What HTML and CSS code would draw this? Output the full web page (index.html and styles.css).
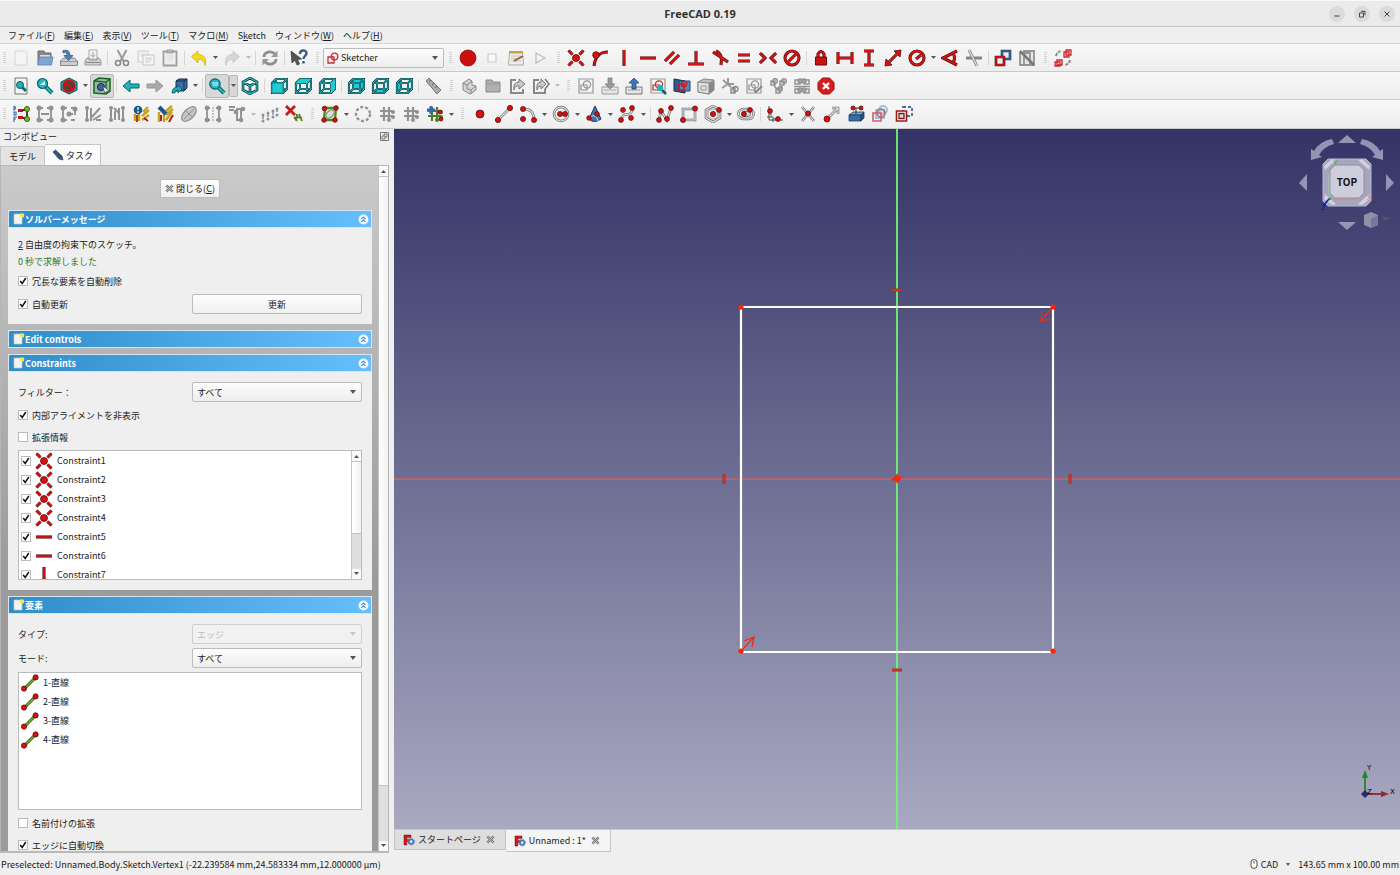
FILE: index.html
```
<!DOCTYPE html>
<html lang="ja">
<head>
    <meta charset="UTF-8">
    <meta name="viewport" content="width=device-width, initial-scale=1.0">
    <title>FreeCAD 0.19</title>
    <link rel="stylesheet" href="styles.css">
</head>
<body>
    <!-- Shared icons -->
    <svg class="sprite" aria-hidden="true">
        <symbol id="coincident" viewBox="0 0 18 18">
            <path class="edge" d="M1.500 1.500l4 4M16.500 1.500l-4 4M1.500 16.500l4-4M16.500 16.500l-4-4"/>
            <path class="core" d="M1.500 1.500l4 4M16.500 1.500l-4 4M1.500 16.500l4-4M16.500 16.500l-4-4"/>
            <circle class="dot" cx="9" cy="9" r="3.500"/>
        </symbol>
        <symbol id="horizontal" viewBox="0 0 18 18">
            <path class="edge" d="M1 9h16"/><path class="core" d="M1 9h16"/>
        </symbol>
        <symbol id="vertical" viewBox="0 0 18 18">
            <path class="edge" d="M9 1v16"/><path class="core" d="M9 1v16"/>
        </symbol>
        <symbol id="edge" viewBox="0 0 18 18">
            <path d="M3 15L15 3" stroke="#344d10" stroke-width="3"/>
            <path d="M3 15L15 3" stroke="#7bb827" stroke-width="1.4"/>
            <circle class="dot" cx="3" cy="14.6" r="2.6"/><circle class="dot" cx="14.6" cy="3.4" r="2.6"/>
        </symbol>
        <symbol id="page" viewBox="0 0 12 12">
            <path d="M1 1h8v10H1z" fill="#f4f4f2" stroke="#c4c4bc" stroke-width=".7"/>
            <circle cx="9" cy="2.5" r="2.3" fill="#f5e45c"/>
        </symbol>
        <symbol id="chevrons" viewBox="0 0 12 12">
            <circle cx="6" cy="6" r="5.4" fill="#f4f9fd"/>
            <path d="M3.8 5.7L6 3.5l2.2 2.2M3.8 8.7L6 6.5l2.2 2.2" fill="none" stroke="#3c83ba" stroke-width="1.1"/>
        </symbol>
        <symbol id="cross" viewBox="0 0 10 10">
            <path d="M1.5 1.5l7 7M8.5 1.5l-7 7" stroke="#757575" stroke-width="2.6"/>
            <path d="M1.5 1.5l7 7M8.5 1.5l-7 7" stroke="#c9c9c9" stroke-width="1"/>
        </symbol>
        <symbol id="logo" viewBox="0 0 12 12">
            <path d="M1 1h7v2.6H3.8v1.8h2.7v2.2H3.8V11H1z" fill="#d4151b" stroke="#6e1010" stroke-width=".5"/>
            <circle cx="8.2" cy="7.7" r="2.2" fill="#dee" stroke="#4b76b5" stroke-width="1.7"/>
            <circle cx="8.2" cy="7.7" r="3.3" fill="none" stroke="#4b76b5" stroke-width="1" stroke-dasharray="1.3 1.3"/>
        </symbol>
        <symbol id="cube" viewBox="0 0 18 18">
            <path d="M2 6l4-4h11v10l-4 4H2z" fill="none" stroke="#063c40" stroke-width="2.2"/>
            <path d="M2 6h11v10M13 6l4-4M6 2v10h11M6 12l-4 4" fill="none" stroke="#063c40" stroke-width="2"/>
            <path d="M2 6l4-4h11v10l-4 4H2zM2 6h11v10M13 6l4-4M6 2v10h11M6 12l-4 4" fill="none" stroke="#2fb9c0" stroke-width=".9"/>
        </symbol>
        <symbol id="hash" viewBox="0 0 18 18">
            <path d="M6 2v14M11 2v14M2 6h13M2 11h12" fill="none" stroke="currentColor" stroke-width="2.2"/>
            <circle cx="15" cy="7" r="2" fill="currentColor"/><circle cx="15" cy="12" r="2" fill="currentColor"/><circle cx="11" cy="15" r="2" fill="currentColor"/>
        </symbol>
        <symbol id="sheet" viewBox="0 0 18 18">
            <path d="M2 2h14v14H2z" fill="#f2f2f2" stroke="#999" stroke-width="1.2"/>
            <path d="M4 8h6v5H4z" fill="none" stroke="currentColor" stroke-width="1.2"/>
            <circle cx="10" cy="7.5" r="3.6" fill="none" stroke="currentColor" stroke-width="1.2"/>
        </symbol>
    </svg>

    <div class="window">
        <header class="titlebar">
            <h1>FreeCAD 0.19</h1>
            <div class="window-buttons">
                <button aria-label="Minimize"><svg viewBox="0 0 8 8"><path d="M1.5 6h5"/></svg></button>
                <button aria-label="Restore"><svg viewBox="0 0 8 8"><path d="M1.5 3h4v4h-4zM3 1.3h4v4"/></svg></button>
                <button aria-label="Close"><svg viewBox="0 0 8 8"><path d="M1.5 1.5l5 5M6.5 1.5l-5 5"/></svg></button>
            </div>
        </header>

        <nav class="menubar">
            <a href="#">ファイル(<u>F</u>)</a>
            <a href="#">編集(<u>E</u>)</a>
            <a href="#">表示(<u>V</u>)</a>
            <a href="#">ツール(<u>T</u>)</a>
            <a href="#">マクロ(<u>M</u>)</a>
            <a href="#">S<u>k</u>etch</a>
            <a href="#">ウィンドウ(<u>W</u>)</a>
            <a href="#">ヘルプ(<u>H</u>)</a>
        </nav>

        <!-- File, workbench, macro and constraint tools -->
        <div class="toolbar">
            <span class="grip"></span>
            <button class="tool" aria-label="New"><svg viewBox="0 0 18 18"><path d="M3 2h12v14H3z" fill="#f5f5f5" stroke="#d3d3d3"/><circle cx="13.5" cy="3.5" r="2.5" fill="#eee"/></svg></button>
            <button class="tool" aria-label="Open"><svg viewBox="0 0 18 18"><path d="M2 14V2h6l1 2h6v10z" fill="#888" stroke="#6d6d6d"/><path d="M4 6h10v4H4z" fill="#ddd"/><path d="M3.5 8H17l-1.5 8H1.5z" fill="#7ea6d3" stroke="#5b82b3" stroke-width=".8"/></svg></button>
            <button class="tool" aria-label="Save"><svg viewBox="0 0 18 18"><path d="M3.5 9h11l3 3v4.5H.5V12z" fill="#ccc" stroke="#888"/><path d="M1 12.500h16" stroke="#999"/><path d="M3 1.500c4-1 7 0 7 5h3L8.500 11.500 4 6.500h3C7 4 6 3 3 4z" fill="#4d83b8" stroke="#2b5580" stroke-width=".7"/></svg></button>
            <button class="tool" aria-label="Print"><svg viewBox="0 0 18 18"><path d="M5 1h8v9H5z" fill="#f4f4f4" stroke="#aaa"/><path d="M9 3v5M7 6l2 2 2-2" stroke="#bbb" stroke-width="1.5" fill="none"/><path d="M3 9h2v2h8V9h2l2 3v4H1v-4z" fill="#d2d2d2" stroke="#999"/><path d="M2 13.500h14" stroke="#888"/></svg></button>
            <span class="sep"></span>
            <button class="tool" aria-label="Cut"><svg viewBox="0 0 18 18"><path d="M4.500 1l6 11M13.500 1l-6 11" stroke="#9b9b9b" stroke-width="2"/><circle cx="5" cy="14" r="2.500" fill="none" stroke="#888" stroke-width="1.500"/><circle cx="13" cy="14" r="2.500" fill="none" stroke="#888" stroke-width="1.500"/></svg></button>
            <button class="tool" aria-label="Copy"><svg viewBox="0 0 18 18"><path d="M1 2h10v11H1z" fill="#f3f3f3" stroke="#ccc"/><path d="M3 5h6M3 7h6" stroke="#ddd"/><path d="M6 6h11v10H6z" fill="#f6f6f6" stroke="#c5c5c5"/><path d="M8 9h7M8 11h7M8 13h5" stroke="#ccc"/></svg></button>
            <button class="tool" aria-label="Paste"><svg viewBox="0 0 18 18"><path d="M2.500 2.500h13v14h-13z" fill="#eee" stroke="#a0a0a0" stroke-width="1.800"/><path d="M6 1h6v3H6z" fill="#bbb" stroke="#888" stroke-width=".7"/><path d="M6 7h7M6 9h7M6 11h5" stroke="#ddd"/></svg></button>
            <span class="sep"></span>
            <button class="tool" aria-label="Undo"><svg viewBox="0 0 18 18"><path d="M1.500 7.500L8 2v3.500c6 0 9 4 7 11-1-5-3-6-7-6V14z" fill="#f5da1b" stroke="#cdb01a" stroke-width=".8"/></svg></button>
            <button class="more" aria-label="Undo list"></button>
            <button class="tool" aria-label="Redo"><svg viewBox="0 0 18 18"><path d="M16.500 7.500L10 2v3.500c-6 0-9 4-7 11 1-5 3-6 7-6V14z" fill="#d6d6d6" stroke="#c5c5c5" stroke-width=".8"/></svg></button>
            <button class="more" aria-label="Redo list" disabled></button>
            <span class="sep"></span>
            <button class="tool" aria-label="Refresh"><svg viewBox="0 0 18 18"><path d="M3 8c0-5 7-7 11-3M15 10c0 5-7 7-11 3" fill="none" stroke="#8e8e8e" stroke-width="2.800"/><path d="M16.500 1.500V8H10zM1.500 16.500V10H8z" fill="#999"/></svg></button>
            <span class="sep"></span>
            <button class="tool" aria-label="What's this?"><svg viewBox="0 0 18 18"><path d="M1 2l1 12 3-3 2 5 2.500-1-2-4.500 4-.5z" fill="#555" stroke="#333" stroke-width=".7"/><path d="M10 5c0-5 6.500-4 6.500-1s-3 3-3 6M13.500 12v2.500" fill="none" stroke="#38598c" stroke-width="2.400"/></svg></button>
            <span class="grip"></span>
            <div class="workbench">
                <svg viewBox="0 0 12 12" aria-hidden="true"><path d="M1 5h6v6H1z" fill="none" stroke="#cf2a2f" stroke-width="1.300"/><circle cx="7.500" cy="4.500" r="3.300" fill="none" stroke="#cf2a2f" stroke-width="1.300"/></svg>
                <select aria-label="Workbench"><option>Sketcher</option></select>
            </div>
            <span class="grip"></span>
            <button class="tool" aria-label="Record macro"><svg viewBox="0 0 18 18"><circle cx="9" cy="9" r="8" fill="#cb0f0f" stroke="#850808" stroke-width=".7"/></svg></button>
            <button class="tool" aria-label="Stop macro"><svg viewBox="0 0 18 18"><path d="M5 5h8v8H5z" fill="#f8f8f8" stroke="#ccc" stroke-width="1.200"/></svg></button>
            <button class="tool" aria-label="Macros"><svg viewBox="0 0 18 18"><path d="M2.500 3h13l1 13h-15z" fill="#ededed" stroke="#999" stroke-width=".8"/><path d="M2 2h14v2.500H2z" fill="#c6a33d"/><path d="M4 7h10M4 9.500h8M4 12h10" stroke="#bbb" stroke-width=".8"/><path d="M7 12l9-5" stroke="#965f36" stroke-width="2"/></svg></button>
            <button class="tool" aria-label="Run macro"><svg viewBox="0 0 18 18"><path d="M5 4l9 5-9 5z" fill="#f4f4f4" stroke="#bbb" stroke-width="1.200"/></svg></button>
            <span class="grip"></span>
            <button class="tool" aria-label="Coincident"><svg><use href="#coincident"/></svg></button>
            <button class="tool" aria-label="Point on object"><svg viewBox="0 0 18 18"><path class="edge" d="M3 17C4 9 7 3 17 3"/><path class="core" d="M3 17C4 9 7 3 17 3"/><circle class="dot" cx="5" cy="6" r="3.300"/></svg></button>
            <button class="tool" aria-label="Vertical"><svg><use href="#vertical"/></svg></button>
            <button class="tool" aria-label="Horizontal"><svg><use href="#horizontal"/></svg></button>
            <button class="tool" aria-label="Parallel"><svg viewBox="0 0 18 18"><path class="edge" d="M2 12L11 3M7 15L16 6"/><path class="core" d="M2 12L11 3M7 15L16 6"/></svg></button>
            <button class="tool" aria-label="Perpendicular"><svg viewBox="0 0 18 18"><path class="edge" d="M9 2v13M1 15h16"/><path class="core" d="M9 2v13M1 15h16"/></svg></button>
            <button class="tool" aria-label="Tangent"><svg viewBox="0 0 18 18"><path class="edge" d="M2 3l15 10M5 2c6 3 6 8 5 14"/><path class="core" d="M2 3l15 10M5 2c6 3 6 8 5 14"/></svg></button>
            <button class="tool" aria-label="Equal"><svg viewBox="0 0 18 18"><path class="edge" d="M3 6h12M3 12h12"/><path class="core" d="M3 6h12M3 12h12"/></svg></button>
            <button class="tool" aria-label="Symmetric"><svg viewBox="0 0 18 18"><path class="edge" d="M1 4l5 5-5 5M17 4l-5 5 5 5"/><path class="core" d="M1 4l5 5-5 5M17 4l-5 5 5 5"/></svg></button>
            <button class="tool" aria-label="Block"><svg viewBox="0 0 18 18"><g class="edge"><circle cx="9" cy="9" r="7"/><path d="M4 14L14 4"/></g><g class="core"><circle cx="9" cy="9" r="7"/><path d="M4 14L14 4"/></g></svg></button>
            <span class="sep"></span>
            <button class="tool" aria-label="Lock"><svg viewBox="0 0 18 18"><path class="edge" d="M6 9V5q3-5 6 0v4"/><path class="core" d="M6 9V5q3-5 6 0v4"/><path d="M3.500 8h11v8h-11z" fill="#c91212" stroke="#6b0808"/></svg></button>
            <button class="tool" aria-label="Horizontal distance"><svg viewBox="0 0 18 18"><path class="edge" d="M2 3v12M16 3v12M2 9h14"/><path class="core" d="M2 3v12M16 3v12M2 9h14"/></svg></button>
            <button class="tool" aria-label="Vertical distance"><svg viewBox="0 0 18 18"><path class="edge" d="M4 2h10M4 16h10M9 2v14"/><path class="core" d="M4 2h10M4 16h10M9 2v14"/></svg></button>
            <button class="tool" aria-label="Distance"><svg viewBox="0 0 18 18"><path class="edge" d="M4 14L14 4"/><path d="M1 17l1-7 6 6zM17 1l-1 7-6-6z" fill="#d31212" stroke="#5a0808" stroke-width=".8"/><path class="core" d="M4 14L14 4"/></svg></button>
            <button class="tool" aria-label="Radius"><svg viewBox="0 0 18 18"><g class="edge"><circle cx="9" cy="9" r="7"/><path d="M8 10l5-4"/></g><g class="core"><circle cx="9" cy="9" r="7"/><path d="M8 10l5-4"/></g></svg></button>
            <button class="more" aria-label="Radius tools"></button>
            <button class="tool" aria-label="Angle"><svg viewBox="0 0 18 18"><path class="edge" d="M16 2L2 9l14 7M12 4q3 5 0 10"/><path class="core" d="M16 2L2 9l14 7M12 4q3 5 0 10"/></svg></button>
            <button class="tool" aria-label="Refraction"><svg viewBox="0 0 18 18"><path d="M1 9h16M4 1l8 16" stroke="#858585" stroke-width="2.800"/><path d="M4 1l8 16" stroke="#ddd" stroke-width="1.400"/></svg></button>
            <span class="sep"></span>
            <button class="tool" aria-label="Toggle driving"><svg viewBox="0 0 18 18"><path d="M8 2h8v8H8z" fill="#eee" stroke="#1c3a66" stroke-width="2.600"/><path d="M8 2h8v8H8z" fill="none" stroke="#4778b3"/><path d="M2 8h8v8H2z" fill="#eee" stroke="#5b0808" stroke-width="2.600"/><path d="M2 8h8v8H2z" fill="none" stroke="#e21818" stroke-width="1.300"/></svg></button>
            <button class="tool" aria-label="Toggle active"><svg viewBox="0 0 18 18"><path d="M6 2h10v14H6zM2 4h10v12H2z" fill="#e5e5e5" stroke="#949494" stroke-width="1.800"/><path d="M2 2l14 14" stroke="#777" stroke-width="2.500"/></svg></button>
            <span class="grip"></span>
            <button class="tool" aria-label="Switch virtual space"><svg viewBox="0 0 18 18"><path d="M2 7q1-4 5-5M16 11q-1 4-5 5" fill="none" stroke="#888" stroke-width="2" stroke-dasharray="3 1"/><path d="M10 3h5v5h-5zM12 1h5v5h-5zM3 11h5v5H3zM1 13h5v4H1z" fill="#f6d5d5" stroke="#c9292e" stroke-width="1.300"/></svg></button>
        </div>

        <!-- View, structure and sketch tools -->
        <div class="toolbar">
            <span class="grip"></span>
            <button class="tool" aria-label="Fit all"><svg viewBox="0 0 18 18"><path d="M3 1h12v16H3z" fill="#f4f4f4" stroke="#777"/><path d="M10 10l4 4" stroke="#0b6f77" stroke-width="3"/><circle cx="8" cy="8" r="3.500" fill="#1eb1bd" stroke="#07636b"/></svg></button>
            <button class="tool" aria-label="Fit selection"><svg viewBox="0 0 18 18"><path d="M10 10l6 6" stroke="#07636b" stroke-width="4"/><path d="M10 10l6 6" stroke="#27b9c3" stroke-width="2"/><circle cx="6.500" cy="6.500" r="5" fill="#25b8c3" stroke="#07636b" stroke-width="1.200"/><path d="M4 8l5-4v4z" fill="#e4ffff"/></svg></button>
            <button class="tool" aria-label="Draw style"><svg viewBox="0 0 18 18"><path d="M9 1l8 4v8l-8 4-8-4V5z" fill="#23a5ad" stroke="#07565d"/><circle cx="9" cy="9" r="5.500" fill="#444" stroke="#c51616" stroke-width="2.200"/><path d="M5 5l8 8" stroke="#c51616" stroke-width="2.200"/></svg></button>
            <button class="more" aria-label="Draw styles"></button>
            <button class="tool pressed" aria-label="Selection box"><svg viewBox="0 0 18 18"><path d="M1 4l5-3 11 1v12l-4 3-12-1z" fill="#9bb8a0" stroke="#14691e" stroke-width="1.500"/><path d="M1 4l12 1v12M13 5l4-3" fill="none" stroke="#14691e" stroke-width="1.300"/><circle cx="8" cy="10" r="3.600" fill="#3465a4" stroke="#152c57"/><path d="M10 9l6 5-3 .5-1 2.500z" fill="#fff" stroke="#333" stroke-width=".6"/></svg></button>
            <span class="sep"></span>
            <button class="tool" aria-label="Back"><svg viewBox="0 0 18 18"><path d="M1 9l7-6v4h9v4H8v4z" fill="#1fb5bf" stroke="#07636b"/></svg></button>
            <button class="tool" aria-label="Forward"><svg viewBox="0 0 18 18"><path d="M17 9l-7-6v4H1v4h9v4z" fill="#aaa" stroke="#959595"/></svg></button>
            <button class="tool" aria-label="Link navigation"><svg viewBox="0 0 18 18"><path d="M6 4l3-2h8v9l-3 3H6z" fill="#3d6ca8" stroke="#142b4b"/><path d="M6 4h8v10M14 4l3-2" fill="none" stroke="#142b4b"/><path d="M2 16q0-6 6-6V8l4 4-4 4v-3q-3 0-3 3z" fill="#25aab5" stroke="#07565d" stroke-width=".8"/></svg></button>
            <button class="more" aria-label="Link actions"></button>
            <span class="sep"></span>
            <button class="tool pressed" aria-label="Sync view"><svg viewBox="0 0 18 18"><path d="M10 10l6 6" stroke="#07636b" stroke-width="4"/><path d="M10 10l6 6" stroke="#27b9c3" stroke-width="2"/><circle cx="7" cy="7" r="5.200" fill="#25b8c3" stroke="#07636b" stroke-width="1.200"/><path d="M4 6h6M5 8h5" stroke="#e0ffff"/></svg></button>
            <button class="more pressed" aria-label="View tools"></button>
            <button class="tool" aria-label="Isometric"><svg viewBox="0 0 18 18"><path d="M9 1l7 4v8l-7 4-7-4V5zM2 5l7 4 7-4M9 9v8" fill="none" stroke="#063c40" stroke-width="2.600"/><path d="M9 1l7 4v8l-7 4-7-4V5zM2 5l7 4 7-4M9 9v8" fill="none" stroke="#2fb9c0" stroke-width="1.100"/></svg></button>
            <span class="sep"></span>
            <button class="tool" aria-label="Front"><svg viewBox="0 0 18 18"><use href="#cube"/><path d="M2 6h11v10H2z" fill="#22cbd4" stroke="#078b93"/></svg></button>
            <button class="tool" aria-label="Top"><svg viewBox="0 0 18 18"><use href="#cube"/><path d="M2 6l4-4h11l-4 4z" fill="#22cbd4"/></svg></button>
            <button class="tool" aria-label="Right"><svg viewBox="0 0 18 18"><use href="#cube"/><path d="M13 6l4-4v10l-4 4z" fill="#22cbd4"/></svg></button>
            <span class="sep"></span>
            <button class="tool" aria-label="Rear"><svg viewBox="0 0 18 18"><path d="M6 2h11v10H6z" fill="#22cbd4"/><use href="#cube"/></svg></button>
            <button class="tool" aria-label="Bottom"><svg viewBox="0 0 18 18"><path d="M2 16l4-4h11l-4 4z" fill="#22cbd4"/><use href="#cube"/></svg></button>
            <button class="tool" aria-label="Left"><svg viewBox="0 0 18 18"><path d="M2 6l4-4v10l-4 4z" fill="#22cbd4"/><use href="#cube"/></svg></button>
            <span class="sep"></span>
            <button class="tool" aria-label="Measure"><svg viewBox="0 0 18 18"><path d="M2 4l3-3 12 12-4 4z" fill="#aaa" stroke="#777"/><path d="M7 3L5 5M10 6L8 8M13 9l-2 2" stroke="#666"/></svg></button>
            <span class="grip"></span>
            <button class="tool" aria-label="Part"><svg viewBox="0 0 18 18"><path d="M3 6l6-4 3 2v4l4 1v4l-6 4-7-4z" fill="#d5d5d5" stroke="#888"/><path d="M3 6l4 2v4l4 1v4M7 8l5-4M11 13l5-4" fill="none" stroke="#888"/></svg></button>
            <button class="tool" aria-label="Group"><svg viewBox="0 0 18 18"><path d="M2 3h6l1 2h7v10H2z" fill="#b0b0b0" stroke="#888"/><path d="M2 7h14" stroke="#999"/></svg></button>
            <button class="tool" aria-label="Make link"><svg viewBox="0 0 18 18"><path d="M8 3H3v13h12v-4" fill="none" stroke="#888" stroke-width="2"/><path d="M6 13q-1-8 5-8V2l6 5-6 5V9q-4-1-5 4z" fill="#c8c8c8" stroke="#777"/></svg></button>
            <button class="tool" aria-label="Make sub-link"><svg viewBox="0 0 18 18"><path d="M7 3H2v13h11v-4" fill="none" stroke="#888" stroke-width="2"/><path d="M5 13q-1-8 4-8V2l5 5-5 5V9q-3-1-4 4z" fill="#c8c8c8" stroke="#777"/><path d="M13 2l4 5-4 5" fill="none" stroke="#777" stroke-width="1.500"/></svg></button>
            <button class="more" aria-label="Link tools" disabled></button>
            <span class="grip"></span>
            <button class="tool dim" aria-label="New sketch"><svg><use href="#sheet"/></svg></button>
            <button class="tool" aria-label="Edit sketch"><svg viewBox="0 0 18 18"><path d="M1 10h16v7H1z" fill="#e6e6e6" stroke="#999"/><path d="M3 13h12" stroke="#aaa"/><path d="M7 1h4v6h3l-5 5-5-5h3z" fill="#999" stroke="#777" stroke-width=".7"/></svg></button>
            <button class="tool" aria-label="Leave sketch"><svg viewBox="0 0 18 18"><path d="M1 10h16v7H1z" fill="#e6e6e6" stroke="#777"/><path d="M3 13h12" stroke="#999"/><path d="M7 12V6H4l5-5 5 5h-3v6z" fill="#3f78b4" stroke="#173a66" stroke-width=".7"/></svg></button>
            <button class="tool red" aria-label="View sketch"><svg viewBox="0 0 18 18"><use href="#sheet"/><path d="M12 12l5 5" stroke="#07636b" stroke-width="2.500"/><circle cx="11" cy="11" r="3.200" fill="#22b5bd"/></svg></button>
            <button class="tool" aria-label="View section"><svg viewBox="0 0 18 18"><path d="M1 2l11 2v12L1 14z" fill="#2e5d96" stroke="#142b4b"/><path d="M6 4h11v10H6z" fill="#5488bd" stroke="#1e4477"/><path d="M6 7h5v6H6z" fill="none" stroke="#c81919" stroke-width="1.500"/><circle cx="11" cy="7" r="2.600" fill="none" stroke="#c81919" stroke-width="1.300"/></svg></button>
            <button class="tool" aria-label="Map sketch"><svg viewBox="0 0 18 18"><path d="M1 5l6-3 10 1v10l-5 4-11-2z" fill="#bdbdbd" stroke="#888"/><path d="M1 5l11 1v11L1 15z" fill="#e0e0e0" stroke="#888"/><path d="M12 6l5-3v10l-5 4z" fill="#888"/><path d="M4 9h5v4H4z" fill="none" stroke="#999"/></svg></button>
            <button class="tool" aria-label="Reorient sketch"><svg viewBox="0 0 18 18"><path d="M7 1v6M7 7L1 11M7 7h6M2 3l8 7" stroke="#999" stroke-width="2"/><path d="M10 11h4v5h-4z" fill="#ddd" stroke="#888" stroke-width="1.300"/><circle cx="14.500" cy="12" r="2.500" fill="none" stroke="#888" stroke-width="1.300"/></svg></button>
            <button class="tool dim" aria-label="Validate sketch"><svg viewBox="0 0 18 18"><use href="#sheet"/><path d="M9 13l2 2 6-6" fill="none" stroke="#888" stroke-width="2"/></svg></button>
            <button class="tool dim" aria-label="Merge sketches"><svg viewBox="0 0 18 18"><g fill="none" stroke="currentColor" stroke-width="1.500"><path d="M2 4h4v4H2zM11 4h4v4h-4zM7 12h4v4H7zM5 9l3 3M13 9l-2 3"/><circle cx="6" cy="4" r="2.300"/><circle cx="15" cy="4" r="2.300"/><circle cx="11" cy="12" r="2.300"/></g></svg></button>
            <button class="tool dim" aria-label="Mirror sketch"><svg viewBox="0 0 18 18"><g fill="none" stroke="currentColor" stroke-width="1.500"><path d="M2 3h5v4H2zM11 3h5v4h-5zM2 12h5v4H2zM11 12h5v4h-5zM1 9.500h16"/><circle cx="7" cy="4" r="2"/><circle cx="11" cy="4" r="2"/><circle cx="7" cy="13" r="2"/><circle cx="11" cy="13" r="2"/></g></svg></button>
            <button class="tool" aria-label="Stop operation"><svg viewBox="0 0 18 18"><path d="M5.500 1h7L17 5.500v7L12.500 17h-7L1 12.500v-7z" fill="#d61c1c" stroke="#a60d0d"/><path d="M6 6l6 6M12 6l-6 6" stroke="#fff" stroke-width="2.400"/></svg></button>
        </div>

        <!-- Sketcher helper and geometry tools -->
        <div class="toolbar">
            <span class="grip"></span>
            <button class="tool" aria-label="Select unconstrained"><svg viewBox="0 0 18 18"><path d="M2 1v4q3-2 0-4M2 7h2v3H2zM2 12v5M2 12h3M2 14h2" fill="none" stroke="#3b68a5" stroke-width="1.100"/><path d="M15 4v10M7 5h7M7 13h7" stroke="#333" stroke-width="1.800"/><path d="M6 4h5v3H6zM6 11h5v3H6z" fill="#be1616"/><circle cx="15" cy="4" r="2.500" fill="#7dbb22" stroke="#355b0c"/><circle cx="15" cy="14" r="2.500" fill="#7dbb22" stroke="#355b0c"/></svg></button>
            <button class="tool dim" aria-label="Select constraints"><svg viewBox="0 0 18 18"><path d="M3 3v12M15 3v12M3 3h4M11 3h4M3 15h4M11 15h4M5 9h8" fill="none" stroke="currentColor" stroke-width="1.800"/><g fill="currentColor"><circle cx="3" cy="3" r="2.500"/><circle cx="15" cy="3" r="2.500"/><circle cx="3" cy="15" r="2.500"/><circle cx="15" cy="15" r="2.500"/></g></svg></button>
            <button class="tool dim" aria-label="Select elements"><svg viewBox="0 0 18 18"><path d="M3 3v12h4M3 3h4M11 3h4v7M7 9h6M11 15h4" fill="none" stroke="currentColor" stroke-width="1.800"/><g fill="currentColor"><circle cx="3" cy="3" r="2.500"/><circle cx="15" cy="4" r="2.500"/><circle cx="3" cy="15" r="2.500"/><circle cx="9" cy="9" r="2.500"/></g></svg></button>
            <button class="tool dim" aria-label="Select redundant"><svg viewBox="0 0 18 18"><path d="M3 2v14M7 3v13M8 12l8-9M9 15l8-5M12 15h5" fill="none" stroke="currentColor" stroke-width="2"/><circle cx="3" cy="3" r="2" fill="currentColor"/><circle cx="3" cy="15" r="2" fill="currentColor"/></svg></button>
            <button class="tool dim" aria-label="Select conflicting"><svg viewBox="0 0 18 18"><path d="M3 3v12M7 6v9M11 3v12M15 3v12M6 3l5 5" fill="none" stroke="currentColor" stroke-width="2"/><circle cx="3" cy="3" r="2" fill="currentColor"/><circle cx="15" cy="3" r="2" fill="currentColor"/><circle cx="3" cy="15" r="2" fill="currentColor"/><circle cx="15" cy="15" r="2" fill="currentColor"/></svg></button>
            <button class="tool" aria-label="Show redundant"><svg viewBox="0 0 18 18"><path d="M3 9v7M7 9v7M11 7l5-5M10 11l7-6M10 15l7-5" stroke="#c6a31c" stroke-width="2.400"/><path d="M5 10v7M12 13l4 3" stroke="#a81818" stroke-width="1.700"/><circle cx="6" cy="5" r="4.300" fill="#175a89"/><path d="M6 2v3M6 6v2" stroke="#fff" stroke-width="1.200"/></svg></button>
            <button class="tool" aria-label="Show conflicting"><svg viewBox="0 0 18 18"><path d="M3 7v10M8 8v9M10 6l6-5M10 10l7-6M10 15l6-8" stroke="#c6a31c" stroke-width="2.400"/><path d="M13 17l4-7M5 10v6" stroke="#b51f1f" stroke-width="2"/><path d="M3 2l7 7" stroke="#24538f" stroke-width="4"/></svg></button>
            <button class="tool dim" aria-label="Show internal geometry"><svg viewBox="0 0 18 18"><ellipse cx="9" cy="9" rx="9" ry="5" transform="rotate(-45 9 9)" fill="#c5c5c5" stroke="currentColor" stroke-width="1.300"/><path d="M4 14L14 4M6 6l6 6" stroke="currentColor"/></svg></button>
            <button class="tool dim" aria-label="Symmetry"><svg viewBox="0 0 18 18"><path d="M3 3v12M15 3v12M3 3h3M12 3h3M3 15h3M12 15h3" fill="none" stroke="currentColor" stroke-width="1.800"/><path d="M9 2v14" stroke="currentColor" stroke-dasharray="2 1"/><g fill="currentColor"><circle cx="3" cy="3" r="2.400"/><circle cx="15" cy="3" r="2.400"/><circle cx="3" cy="15" r="2.400"/><circle cx="15" cy="15" r="2.400"/></g></svg></button>
            <button class="tool dim" aria-label="Clone"><svg viewBox="0 0 18 18"><path d="M1 2h6M1 5h5M8 4h8M9 4v11h3M13 5v9" fill="none" stroke="currentColor" stroke-width="2"/><g fill="currentColor"><circle cx="15" cy="4" r="2.300"/><circle cx="13" cy="15" r="2.300"/><circle cx="8" cy="7" r="2.300"/></g></svg></button>
            <button class="more" aria-label="Clone tools" disabled></button>
            <button class="tool dim" aria-label="Rectangular array"><svg viewBox="0 0 18 18"><path d="M2 11v5M7 9v6M12 7v6M16 4v7" stroke="currentColor" stroke-width="1.500" stroke-dasharray="3 2"/><g fill="currentColor"><circle cx="2" cy="10" r="1.500"/><circle cx="2" cy="16" r="1.500"/><circle cx="7" cy="8" r="1.500"/><circle cx="7" cy="14" r="1.500"/><circle cx="12" cy="6" r="1.500"/><circle cx="12" cy="12" r="1.500"/><circle cx="16" cy="4" r="1.500"/><circle cx="16" cy="10" r="1.500"/></g></svg></button>
            <button class="tool" aria-label="Remove alignment"><svg viewBox="0 0 18 18"><path d="M1 1l9 9M10 1L1 10" stroke="#ca1717" stroke-width="2.800"/><path d="M9 12l3 4M12 9l-1 7M14 9l3 7M12 12l5 1" stroke="#557d24" stroke-width="1.900"/></svg></button>
            <span class="grip"></span>
            <button class="tool" aria-label="B-spline polygon"><svg viewBox="0 0 18 18"><path d="M4 3h11l-1 12H3z" fill="#e5e9df" stroke="#4d8a18" stroke-width="2.300"/><ellipse cx="9" cy="9" rx="5" ry="3" transform="rotate(-45 9 9)" fill="#ddd" stroke="#777"/><circle class="dot" cx="3.500" cy="3.500" r="2.300"/><circle class="dot" cx="15" cy="3" r="2.300"/><circle class="dot" cx="3" cy="15" r="2.300"/><circle class="dot" cx="14" cy="15" r="2.300"/></svg></button>
            <button class="more" aria-label="B-spline information"></button>
            <button class="tool dim" aria-label="Convert to NURBS"><svg viewBox="0 0 18 18"><circle cx="9" cy="9" r="7" fill="none" stroke="currentColor" stroke-width="2.300" stroke-dasharray="3 2"/></svg></button>
            <button class="tool dim" aria-label="Increase degree"><svg><use href="#hash"/></svg></button>
            <button class="tool dim" aria-label="Decrease degree"><svg><use href="#hash"/></svg></button>
            <button class="tool green" aria-label="Knot multiplicity"><svg viewBox="0 0 18 18"><use href="#hash"/><path d="M1 5h8M5 1v8" stroke="#3769a5" stroke-width="3"/><circle class="dot" cx="14" cy="7" r="2"/><circle class="dot" cx="15" cy="14" r="2"/></svg></button>
            <button class="more" aria-label="Knot tools"></button>
            <span class="grip"></span>
            <button class="tool" aria-label="Point"><svg viewBox="0 0 18 18"><circle class="dot" cx="9" cy="9" r="4"/></svg></button>
            <button class="tool" aria-label="Line"><svg viewBox="0 0 18 18"><path class="pipe" d="M3 15L15 3"/><path class="pipe-in" d="M3 15L15 3"/><circle class="dot" cx="3" cy="15" r="2.600"/><circle class="dot" cx="15" cy="3" r="2.600"/></svg></button>
            <button class="tool" aria-label="Arc"><svg viewBox="0 0 18 18"><path class="pipe" d="M3 4q12-1 12 11"/><path class="pipe-in" d="M3 4q12-1 12 11"/><circle class="dot" cx="4" cy="4" r="2.500"/><circle class="dot" cx="4" cy="14" r="2.500"/><circle class="dot" cx="15" cy="15" r="2.500"/></svg></button>
            <button class="more" aria-label="Arc tools"></button>
            <button class="tool" aria-label="Circle"><svg viewBox="0 0 18 18"><circle class="pipe" cx="9" cy="9" r="7"/><circle class="pipe-in" cx="9" cy="9" r="7"/><circle class="dot" cx="8" cy="9" r="2.500"/><circle class="dot" cx="13" cy="9" r="2.500"/></svg></button>
            <button class="more" aria-label="Circle tools"></button>
            <button class="tool" aria-label="Conic"><svg viewBox="0 0 18 18"><path d="M10 1l6 13q-7 5-12 0z" fill="#4173aa" stroke="#1b3a61"/><path d="M5 12q6-4 8 4" fill="none" stroke="#d5dfe9"/><circle class="dot" cx="4" cy="13" r="2.300"/><circle class="dot" cx="12" cy="9" r="2.300"/></svg></button>
            <button class="more" aria-label="Conic tools"></button>
            <button class="tool" aria-label="B-spline"><svg viewBox="0 0 18 18"><path class="pipe" d="M3 15C6 4 11 15 15 4"/><path class="pipe-in" d="M3 15C6 4 11 15 15 4"/><circle class="dot" cx="3" cy="15" r="2.400"/><circle class="dot" cx="5" cy="5" r="2.400"/><circle class="dot" cx="14" cy="3" r="2.400"/><circle class="dot" cx="13" cy="13" r="2.400"/></svg></button>
            <button class="more" aria-label="B-spline tools"></button>
            <span class="sep"></span>
            <button class="tool" aria-label="Polyline"><svg viewBox="0 0 18 18"><path class="pipe" d="M3 15L5 6l6 9 4-12"/><path class="pipe-in" d="M3 15L5 6l6 9 4-12"/><circle class="dot" cx="3" cy="15" r="2.400"/><circle class="dot" cx="5" cy="6" r="2.400"/><circle class="dot" cx="11" cy="14" r="2.400"/><circle class="dot" cx="15" cy="3" r="2.400"/></svg></button>
            <button class="tool" aria-label="Rectangle"><svg viewBox="0 0 18 18"><path class="pipe" d="M3 4h12v11H3z"/><path class="pipe-in" d="M3 4h12v11H3z"/><circle class="dot" cx="3" cy="15" r="2.500"/><circle class="dot" cx="15" cy="3.500" r="2.500"/></svg></button>
            <button class="tool" aria-label="Polygon"><svg viewBox="0 0 18 18"><path class="pipe" d="M9 1l7 4v8l-7 4-7-4V5z"/><path class="pipe-in" d="M9 1l7 4v8l-7 4-7-4V5z"/><circle cx="9" cy="9" r="5" fill="none" stroke="#aaa"/><circle class="dot" cx="9" cy="9" r="2.600"/><circle class="dot" cx="15" cy="5" r="2.400"/></svg></button>
            <button class="more" aria-label="Polygon tools"></button>
            <button class="tool" aria-label="Slot"><svg viewBox="0 0 18 18"><rect class="pipe" x="1.500" y="4" width="15" height="10" rx="5"/><rect class="pipe-in" x="1.500" y="4" width="15" height="10" rx="5"/><rect x="4.500" y="6.500" width="9" height="5" rx="2.500" fill="#ddd" stroke="#777"/><circle class="dot" cx="7" cy="9" r="2.400"/><circle class="dot" cx="13" cy="5" r="2.400"/></svg></button>
            <span class="sep"></span>
            <button class="tool" aria-label="Fillet"><svg viewBox="0 0 18 18"><path d="M3 1v14h14M1 12h5M7 13v4" fill="none" stroke="#444"/><path d="M4 7q1 6 8 8" fill="none" stroke="#888" stroke-width="1.500"/><circle class="dot" cx="4" cy="6" r="2.400"/><circle class="dot" cx="12" cy="14" r="2.400"/></svg></button>
            <button class="more" aria-label="Fillet tools"></button>
            <button class="tool" aria-label="Trim"><svg viewBox="0 0 18 18"><path class="pipe" d="M3 2l12 14M15 2L3 16"/><path class="pipe-in" d="M3 2l12 14M15 2L3 16"/><circle class="dot" cx="9" cy="8.500" r="2.500"/></svg></button>
            <button class="tool" aria-label="Extend"><svg viewBox="0 0 18 18"><path class="pipe" d="M4 14L15 3M9 3h6v6"/><path class="pipe-in" d="M4 14L15 3M9 3h6v6"/><circle class="dot" cx="4" cy="14" r="3"/></svg></button>
            <button class="tool" aria-label="External geometry"><svg viewBox="0 0 18 18"><path d="M2 10l4-3h11l-3 3H2z" fill="#7fabd0" stroke="#193b60" stroke-width=".8"/><path d="M2 10h12v6H2z" fill="#376da4" stroke="#193b60" stroke-width=".8"/><path d="M14 10l3-3v6l-3 3z" fill="#28527f" stroke="#193b60" stroke-width=".8"/><path d="M9 9V3M5 3h9" stroke="#333"/><circle class="dot" cx="6" cy="3" r="2"/><circle class="dot" cx="14" cy="3" r="2"/></svg></button>
            <button class="tool" aria-label="Carbon copy"><svg viewBox="0 0 18 18"><path d="M5 5h8v8H5z" fill="#c9e8fb" stroke="#8cc6e9" stroke-width="2"/><circle cx="12" cy="5" r="4" fill="none" stroke="#8cc6e9" stroke-width="2"/><path d="M2 8h8v8H2z" fill="none" stroke="#d1605f" stroke-width="1.600"/><circle cx="10" cy="8" r="4" fill="none" stroke="#d1605f" stroke-width="1.600"/></svg></button>
            <button class="tool" aria-label="Construction geometry"><svg viewBox="0 0 18 18"><path d="M8 2h9v9H8z" fill="none" stroke="#4569a0" stroke-width="1.800" stroke-dasharray="3 2"/><path d="M1.500 6h10v10h-10z" fill="#fff" stroke="#9a1b1b" stroke-width="1.600"/><path d="M4 8.500h5v5H4z" fill="#ddd" stroke="#7a1717" stroke-width="1.300"/></svg></button>
        </div>

        <main class="workspace">
            <aside class="dock">
                <div class="dock-title">
                    <h2>コンボビュー</h2>
                    <button aria-label="Float"><svg viewBox="0 0 9 9"><path d="M.5.5h8v8h-8zM2 4h3v3H2zM4 4V2h3v3H5" fill="none" stroke="#777"/></svg></button>
                </div>
                <div class="dock-tabs">
                    <button>モデル</button>
                    <button class="active"><svg viewBox="0 0 12 12"><path d="M1 3l2.500-2L10 7l1 4-4-1z" fill="#36557d" stroke="#1d324f" stroke-width=".6"/></svg>タスク</button>
                </div>
                <div class="task-area">
                    <div class="tasks">
                        <button class="close-button"><svg><use href="#cross"/></svg><span>閉じる(<u>C</u>)</span></button>

                        <section class="group">
                            <h3><svg><use href="#page"/></svg>ソルバーメッセージ<button aria-label="Collapse"><svg><use href="#chevrons"/></svg></button></h3>
                            <div class="group-body">
                                <p><a href="#">2</a> 自由度の拘束下のスケッチ。</p>
                                <p class="solved">0 秒で求解しました</p>
                                <label class="check"><input type="checkbox" checked>冗長な要素を自動削除</label>
                                <div class="row">
                                    <label class="check"><input type="checkbox" checked>自動更新</label>
                                    <button class="update">更新</button>
                                </div>
                            </div>
                        </section>

                        <section class="group">
                            <h3><svg><use href="#page"/></svg>Edit controls<button aria-label="Expand"><svg><use href="#chevrons"/></svg></button></h3>
                        </section>

                        <section class="group">
                            <h3><svg><use href="#page"/></svg>Constraints<button aria-label="Collapse"><svg><use href="#chevrons"/></svg></button></h3>
                            <div class="group-body">
                                <div class="row">
                                    <label for="filter">フィルター：</label>
                                    <select id="filter"><option>すべて</option></select>
                                </div>
                                <label class="check"><input type="checkbox" checked>内部アライメントを非表示</label>
                                <label class="check"><input type="checkbox">拡張情報</label>
                                <div class="list constraints">
                                    <ul>
                                        <li><label><input type="checkbox" checked><svg><use href="#coincident"/></svg>Constraint1</label></li>
                                        <li><label><input type="checkbox" checked><svg><use href="#coincident"/></svg>Constraint2</label></li>
                                        <li><label><input type="checkbox" checked><svg><use href="#coincident"/></svg>Constraint3</label></li>
                                        <li><label><input type="checkbox" checked><svg><use href="#coincident"/></svg>Constraint4</label></li>
                                        <li><label><input type="checkbox" checked><svg><use href="#horizontal"/></svg>Constraint5</label></li>
                                        <li><label><input type="checkbox" checked><svg><use href="#horizontal"/></svg>Constraint6</label></li>
                                        <li><label><input type="checkbox" checked><svg><use href="#vertical"/></svg>Constraint7</label></li>
                                    </ul>
                                    <div class="scrollbar"><span class="up"></span><span class="thumb"></span><span class="down"></span></div>
                                </div>
                            </div>
                        </section>

                        <section class="group">
                            <h3><svg><use href="#page"/></svg>要素<button aria-label="Collapse"><svg><use href="#chevrons"/></svg></button></h3>
                            <div class="group-body">
                                <div class="row">
                                    <label for="type">タイプ:</label>
                                    <select id="type" disabled><option>エッジ</option></select>
                                </div>
                                <div class="row">
                                    <label for="mode">モード:</label>
                                    <select id="mode"><option>すべて</option></select>
                                </div>
                                <div class="list elements">
                                    <ul>
                                        <li><svg><use href="#edge"/></svg>1-直線</li>
                                        <li><svg><use href="#edge"/></svg>2-直線</li>
                                        <li><svg><use href="#edge"/></svg>3-直線</li>
                                        <li><svg><use href="#edge"/></svg>4-直線</li>
                                    </ul>
                                </div>
                                <label class="check"><input type="checkbox">名前付けの拡張</label>
                                <label class="check"><input type="checkbox" checked>エッジに自動切換</label>
                            </div>
                        </section>
                    </div>
                    <div class="scrollbar tall"><span class="up"></span><span class="thumb"></span><span class="down"></span></div>
                </div>
            </aside>

            <div class="splitter"></div>

            <section class="document">
                <div class="view">
                    <!-- Sketch, drawn around the origin -->
                    <svg class="sketch">
                        <svg x="50%" y="50%" overflow="visible">
                            <path d="M-2000 0H2000" stroke="#c8646e" stroke-width="1.500"/>
                            <path d="M0-2000V2000" stroke="#73f573" stroke-width="1.800"/>
                            <path d="M-156-172H156V173H-156z" fill="none" stroke="#fff" stroke-width="2.200"/>
                            <g fill="#ff230a"><circle cx="-156" cy="-172" r="2.600"/><circle cx="156" cy="-172" r="2.600"/><circle cx="-156" cy="172" r="2.600"/><circle cx="156" cy="172" r="2.600"/></g>
                            <g stroke="#7b3c38" stroke-width="3"><path d="M-5-189H5M-5 191H5M-173-5V5M173-5V5"/></g>
                            <g fill="none" stroke="#f02b10" stroke-width="1.300"><path d="M-5-189H5M-5 191H5M-173-5V5M173-5V5"/><path d="M154-170l-10 12M145-168l-1 10 9-2M-154 170l11-12M-153 162l10-4-2 10"/></g>
                            <path d="M-6 1l4-4 3-3v3l5 1-4 4-2 3-1-3z" fill="#ff230a"/>
                        </svg>
                    </svg>

                    <svg class="nav-cube" viewBox="0 0 100 96" aria-label="Navigation cube">
                        <g fill="#a3a3c1" fill-opacity=".85">
                            <path d="M47 0l9 8H38zM47 95l-9-8h18zM-1 48l8-9v17zM94 48l-8-9v17z"/>
                            <path d="M32 4Q20 6 14 16l-3-2v11l11-3-3-2Q23 12 34 9zM62 4Q74 6 80 16l3-2v11l-11-3 3-2Q71 12 60 9z"/>
                        </g>
                        <path d="M28 24h38l5 5v37l-5 5H28l-5-5V29z" fill="#a5a5bd" stroke="#b8b8cc"/>
                        <path d="M24 31l8-7 4 1-11 10zM70 31l-8-7-4 1 11 10zM24 64l8 6 4-1-11-10zM70 64l-8 6-4-1 11-10z" fill="#d1d1df"/>
                        <path d="M35 30h24l5 5v23l-5 5H35l-5-5V35z" fill="#cdcddb" stroke="#9090aa"/>
                        <path d="M29 64V39" stroke="#98cf9a"/><path d="M29 64h26" stroke="#d98b78"/><path d="M29 64l-6 7" stroke="#0814d0" stroke-width="1.500"/>
                        <circle cx="29.500" cy="64" r="1.300" fill="#178c29"/>
                        <text class="cube-label" x="47" y="51">TOP</text>
                        <text class="cube-axis x" x="67" y="65">X</text><text class="cube-axis y" x="33" y="30">Y</text><text class="cube-axis z" x="21" y="75">Z</text>
                        <path d="M64 80l7-3 7 3v10l-7 3-7-3z" fill="#9090aa"/><path d="M71 84l7-4v10l-7 3z" fill="#77779a"/>
                        <path d="M81 82h9l-4 4z" fill="#555566"/>
                    </svg>

                    <svg class="axis-cross" viewBox="0 0 36 36" aria-label="Axis cross">
                        <path d="M8 28V10" stroke="#2a8c3b" stroke-width="2"/><path d="M8 4l3 8H5z" fill="#168a2c"/>
                        <path d="M8 28h18" stroke="#903038" stroke-width="2"/><path d="M32 28l-8 3v-6z" fill="#8c2b2b"/>
                        <path d="M8 24l4 4-4 4-4-4z" fill="#2d2d66"/>
                        <text x="10" y="4">Y</text><text x="10" y="28">Z</text><text x="33" y="28">X</text>
                    </svg>
                </div>
                <div class="doc-tabs">
                    <button><svg class="app"><use href="#logo"/></svg>スタートページ<svg><use href="#cross"/></svg></button>
                    <button class="active"><svg class="app"><use href="#logo"/></svg>Unnamed : 1*<svg><use href="#cross"/></svg></button>
                </div>
            </section>
        </main>

        <footer class="statusbar">
            <span>Preselected: Unnamed.Body.Sketch.Vertex1 (-22.239584 mm,24.583334 mm,12.000000 µm)</span>
            <button class="nav-style"><svg viewBox="0 0 8 10"><rect x="1" y=".7" width="6" height="8.600" rx="2.500" fill="#fff" stroke="#444"/><path d="M4 2v2.500" stroke="#444"/></svg>CAD</button>
            <span>143.65 mm x 100.00 mm</span>
        </footer>
    </div>
</body>
</html>
```
FILE: styles.css
```
* {
    margin: 0;
    padding: 0;
    box-sizing: border-box;
}

body {
    font-family: "Noto Sans CJK JP", "Noto Sans", sans-serif;
    font-size: 9px;
    line-height: 13px;
    color: #1a1a1a;
    background-color: #efefef;
}

button,
select,
input {
    font: inherit;
    color: inherit;
}

button {
    border: none;
    background: none;
}

svg {
    display: block;
    flex: none;
}

a {
    color: inherit;
    text-decoration: none;
}

u {
    text-underline-offset: 1px;
}

.sprite {
    position: absolute;
    width: 0;
    height: 0;
}

.window {
    display: flex;
    flex-direction: column;
    height: 100vh;
    overflow: hidden;
}

/* Title and menus */
.titlebar {
    display: grid;
    grid-template-columns: 1fr auto 1fr;
    align-items: center;
    height: 27px;
    flex: none;
    padding: 0 5px;
    background: #ebebeb;
    border-top: 1px solid #f8f8f8;
    border-bottom: 1px solid #c5c5c5;
}

.titlebar h1 {
    grid-column: 2;
    font-family: "Open Sans", "Noto Sans", sans-serif;
    font-size: 11px;
    color: #333;
}

.window-buttons {
    display: flex;
    justify-content: flex-end;
    gap: 9px;
}

.window-buttons button {
    display: grid;
    place-items: center;
    width: 16px;
    height: 16px;
    border-radius: 50%;
    background: #dbdbdb;
}

.window-buttons svg {
    width: 8px;
    height: 8px;
    fill: none;
    stroke: #444;
}

.menubar {
    display: flex;
    align-items: center;
    gap: 9px;
    height: 17px;
    flex: none;
    padding-left: 8px;
    border-bottom: 1px solid #d8d8d8;
}

/* Toolbars */
.toolbar {
    display: flex;
    align-items: center;
    height: 28px;
    flex: none;
    background: linear-gradient(#f7f7f7, #eeeeee);
    border-bottom: 1px solid #c9c9c9;
}

.toolbar:nth-of-type(3) {
    height: 29px;
}

.grip {
    width: 12px;
    height: 12px;
    flex: none;
    background: repeating-linear-gradient(#d2d2d2 0 1px, transparent 1px 2px) center / 3px 100% no-repeat;
}

.grip:first-child {
    width: 9px;
}

.sep {
    width: 5px;
    height: 14px;
    flex: none;
    background: linear-gradient(#d6d6d6, #d6d6d6) center / 1px 100% no-repeat;
}

.tool {
    display: grid;
    place-items: center;
    width: 24px;
    height: 24px;
    flex: none;
    color: #777;
}

.tool > svg {
    width: 18px;
    height: 18px;
}

.dim {
    color: #929292;
}

.red {
    color: #cc2a2a;
}

.green {
    color: #527b2b;
}

.more {
    width: 9px;
    height: 22px;
    flex: none;
    background: url("data:image/svg+xml,%3Csvg xmlns='http://www.w3.org/2000/svg' width='5' height='3'%3E%3Cpath d='M0 0h5L2.500 3z' fill='%23555'/%3E%3C/svg%3E") center no-repeat;
}

.more:disabled {
    opacity: 0.35;
}

.pressed {
    background-color: #d8d8d8;
    border: 1px solid #b7b7b7;
    border-radius: 2px;
}

.edge,
.core {
    fill: none;
    stroke: #590808;
    stroke-width: 3.1;
}

.core {
    stroke: #d51515;
    stroke-width: 1.8;
}

.dot {
    fill: #d51212;
    stroke: #650808;
    stroke-width: 0.8;
}

.pipe,
.pipe-in {
    fill: none;
    stroke: #707070;
    stroke-width: 2.6;
}

.pipe-in {
    stroke: #e6e6e6;
    stroke-width: 1.1;
}

select {
    width: 170px;
    height: 20px;
    padding: 0 4px;
    appearance: none;
    border: 1px solid #bcbcbc;
    border-radius: 2px;
    background: url("data:image/svg+xml,%3Csvg xmlns='http://www.w3.org/2000/svg' width='6' height='4'%3E%3Cpath d='M0 0h6L3 4z' fill='%23555'/%3E%3C/svg%3E") right 5px center no-repeat, linear-gradient(#fdfdfd, #eeeeee);
}

select:disabled {
    color: #bbb;
    border-color: #cecece;
    opacity: 1;
    background: url("data:image/svg+xml,%3Csvg xmlns='http://www.w3.org/2000/svg' width='6' height='4'%3E%3Cpath d='M0 0h6L3 4z' fill='%23c8c8c8'/%3E%3C/svg%3E") right 5px center no-repeat, #f1f1f1;
}

.workbench {
    display: grid;
    align-items: center;
    width: 121px;
}

.workbench > * {
    grid-area: 1 / 1;
}

.workbench svg {
    z-index: 1;
    width: 12px;
    height: 12px;
    margin-left: 4px;
}

.workbench select {
    width: 100%;
    padding-left: 17px;
}

/* Combo view */
.workspace {
    display: flex;
    flex: 1;
    min-height: 0;
}

.dock {
    display: flex;
    flex-direction: column;
    width: 389px;
    flex: none;
}

.dock-title {
    display: flex;
    justify-content: space-between;
    align-items: center;
    height: 15px;
    padding-left: 3px;
}

.dock-title h2 {
    font-size: 9px;
    font-weight: normal;
}

.dock-title svg {
    width: 9px;
    height: 9px;
}

.dock-tabs {
    display: flex;
    align-items: flex-end;
    height: 21px;
}

.dock-tabs button {
    display: flex;
    align-items: center;
    gap: 2px;
    height: 19px;
    padding: 0 8px;
    background: #e3e3e3;
    border: 1px solid #c6c6c6;
    border-bottom: none;
}

.dock-tabs .active {
    height: 21px;
    padding: 0 7px;
    background: #fbfbfb;
    border-left: none;
}

.dock-tabs svg {
    width: 12px;
    height: 12px;
}

.task-area {
    display: flex;
    flex: 1;
    min-height: 0;
    border: 1px solid #b5b5b5;
    border-bottom: 2px solid #b9b9b9;
}

.tasks {
    display: flex;
    flex-direction: column;
    gap: 6px;
    flex: 1;
    padding: 13px 6px 0 7px;
    overflow: hidden;
    background: linear-gradient(#cacaca, #9b9b9b 60%);
}

.close-button,
.update {
    border: 1px solid #bcbcbc;
    border-radius: 2px;
    background: linear-gradient(#fdfdfd, #f0f0f0);
}

.close-button {
    display: flex;
    align-items: center;
    gap: 2px;
    align-self: center;
    height: 19px;
    flex: none;
    margin-bottom: 6px;
    padding: 0 4px;
}

.close-button svg {
    width: 9px;
    height: 9px;
}

.group {
    flex: none;
    background: #efefef;
}

.group h3 {
    display: flex;
    align-items: center;
    height: 18px;
    padding: 0 2px 0 4px;
    font-size: 9px;
    color: #fff;
    background: linear-gradient(90deg, #308dc8, #65bffd);
    border: 1px solid #d9e4ed;
    border-radius: 2px 2px 0 0;
}

.group h3 > svg {
    width: 12px;
    height: 12px;
}

.group h3 button {
    margin-left: auto;
}

.group h3 button svg {
    width: 11px;
    height: 11px;
}

.group-body {
    display: flex;
    flex-direction: column;
    gap: 4px;
    padding: 10px;
}

.group-body a {
    color: #1226d8;
    text-decoration: underline;
}

.solved {
    color: #2b7d2b;
}

.row {
    display: flex;
    align-items: center;
    justify-content: space-between;
}

.update {
    width: 170px;
    height: 20px;
}

.check {
    display: flex;
    align-items: center;
    gap: 4px;
    height: 18px;
}

input[type="checkbox"] {
    width: 10px;
    height: 10px;
    appearance: none;
    background: #fff;
    border: 1px solid #bbb;
}

input[type="checkbox"]:checked {
    background: #fff url("data:image/svg+xml,%3Csvg xmlns='http://www.w3.org/2000/svg' viewBox='0 0 8 8'%3E%3Cpath d='M1.200 4l2 2.500L6.800 1' fill='none' stroke='%23111' stroke-width='1.500'/%3E%3C/svg%3E");
}

.list {
    display: flex;
    background: #fff;
    border: 1px solid #bbb;
    overflow: hidden;
}

.list ul {
    flex: 1;
    list-style: none;
}

.list li,
.list li label {
    display: flex;
    align-items: center;
    height: 19px;
    gap: 4px;
}

.list li {
    padding-left: 2px;
}

.list svg {
    width: 18px;
    height: 18px;
}

.constraints {
    height: 130px;
}

.elements {
    height: 138px;
}

.scrollbar {
    display: flex;
    flex-direction: column;
    width: 10px;
    flex: none;
    background: #dfdfdf;
    border-left: 1px solid #c3c3c3;
}

.scrollbar .up,
.scrollbar .down {
    height: 10px;
    background: url("data:image/svg+xml,%3Csvg xmlns='http://www.w3.org/2000/svg' width='5' height='3'%3E%3Cpath d='M0 3h5L2.500 0z' fill='%23555'/%3E%3C/svg%3E") center no-repeat, #fafafa;
}

.scrollbar .down {
    margin-top: auto;
    transform: rotate(180deg);
}

.scrollbar .thumb {
    height: 57%;
    background: linear-gradient(90deg, #fff, #f2f2f2);
    border: solid #c3c3c3;
    border-width: 1px 0;
}

.scrollbar.tall .thumb {
    height: 89%;
}

.splitter {
    width: 5px;
    flex: none;
    background: #efefef;
}

/* 3D view */
.document {
    display: flex;
    flex-direction: column;
    flex: 1;
    min-width: 0;
}

.view {
    position: relative;
    flex: 1;
    overflow: hidden;
    background: linear-gradient(#333366, #a9a9c2);
}

.sketch {
    width: 100%;
    height: 100%;
}

.nav-cube {
    position: absolute;
    top: 6px;
    right: 0;
    width: 100px;
    height: 96px;
    overflow: visible;
}

.cube-label {
    font-size: 10px;
    font-weight: bold;
    text-anchor: middle;
    fill: #111;
}

.cube-axis {
    font: 7px "Liberation Sans", sans-serif;
}

.cube-axis.x {
    fill: #e27863;
}

.cube-axis.y {
    fill: #2fa83c;
}

.cube-axis.z {
    fill: #0814d0;
}

.axis-cross {
    position: absolute;
    right: 7px;
    bottom: 27px;
    width: 36px;
    height: 36px;
    overflow: visible;
    font: 7px "DejaVu Sans", sans-serif;
}

.doc-tabs {
    display: flex;
    align-items: flex-start;
    height: 24px;
    flex: none;
    border-top: 1px solid #c8c8c8;
}

.doc-tabs button {
    display: flex;
    align-items: center;
    gap: 3px;
    height: 20px;
    padding: 0 10px 0 8px;
    background: #dedede;
    border: 1px solid #c3c3c3;
    border-top: none;
}

.doc-tabs .active {
    height: 22px;
    background: #f5f5f5;
    border-left: none;
    border-radius: 0 0 2px 2px;
}

.doc-tabs svg {
    width: 9px;
    height: 9px;
    margin-left: 2px;
}

.doc-tabs .app {
    width: 12px;
    height: 12px;
    margin-left: 0;
}

.statusbar {
    display: flex;
    align-items: center;
    height: 22px;
    flex: none;
    padding: 0 1px;
}

.nav-style {
    display: flex;
    align-items: center;
    gap: 3px;
    margin-left: auto;
    margin-right: 8px;
    padding-right: 12px;
    background: url("data:image/svg+xml,%3Csvg xmlns='http://www.w3.org/2000/svg' width='4' height='3'%3E%3Cpath d='M0 0h4L2 3z' fill='%23555'/%3E%3C/svg%3E") right center no-repeat;
}

.nav-style svg {
    width: 8px;
    height: 10px;
}
```
